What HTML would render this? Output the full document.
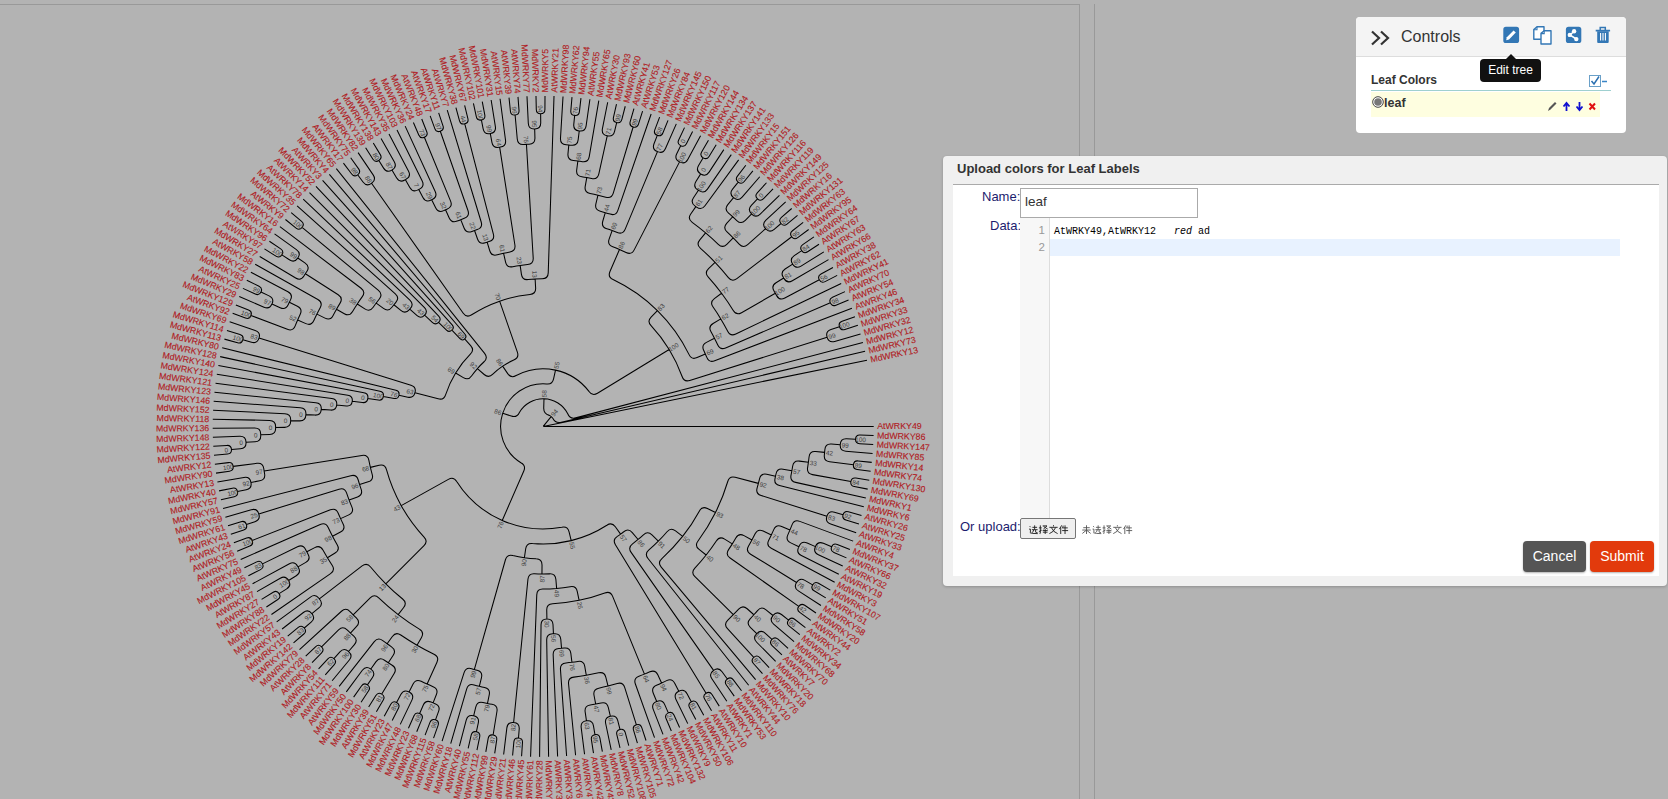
<!DOCTYPE html>
<html><head><meta charset="utf-8">
<style>
*{box-sizing:border-box;margin:0;padding:0}
html,body{width:1668px;height:799px;overflow:hidden;background:#b3b3b3;font-family:"Liberation Sans",sans-serif}
#tree{position:absolute;left:0;top:0;width:1668px;height:799px}
#tree text{font-family:"Liberation Sans",sans-serif}
.vl{position:absolute;top:4px;bottom:0;width:1px;background:#999}
#topl{position:absolute;left:0;top:4px;width:1080px;height:1px;background:#999}
/* controls */
#ctl{position:absolute;left:1356px;top:17px;width:270px;height:116px;background:#fff;border-radius:4px;overflow:hidden}
#ctlh{position:absolute;left:0;top:0;width:270px;height:40px;background:#f4f4f4;border-bottom:1px solid #ddd}
#ctlh .t{position:absolute;left:45px;top:11px;font-size:16px;color:#333}
#tip{position:absolute;left:1480px;top:59px;width:61px;height:23px;background:#111;border-radius:4px;color:#fff;font-size:12px;line-height:23px;text-align:center}
#tiparr{position:absolute;left:1506px;top:54px;width:0;height:0;border-left:5px solid transparent;border-right:5px solid transparent;border-bottom:5px solid #111}
#lc{position:absolute;left:15px;top:56px;font-size:12px;font-weight:bold;color:#333}
#lcline{position:absolute;left:15px;top:73px;width:240px;height:1px;background:#9fd0d0}
#row{position:absolute;left:15px;top:75px;width:229px;height:25px;background:#fefee0}
#row .n{position:absolute;left:13px;top:4px;font-size:12.5px;font-weight:bold;color:#333}
/* dialog */
#dlg{position:absolute;left:943px;top:156px;width:724px;height:430px;background:#f0f0f0;border-radius:4px;box-shadow:0 1px 3px rgba(0,0,0,.2)}
#dlg .title{position:absolute;left:14px;top:5px;font-size:13px;font-weight:bold;color:#333}
#content{position:absolute;left:10px;top:28px;width:706px;height:392px;background:#fff;border-top:1px solid #aaa}
.lab{position:absolute;font-size:13px;color:#1c1c6e}
#name{position:absolute;left:67px;top:3px;width:178px;height:30px;border:1px solid #aaa;background:#fff}
#name span{position:absolute;left:4px;top:5px;font-size:13.5px;color:#333}
#gut{position:absolute;left:67px;top:33px;width:30px;height:300px;background:#f7f7f7;border-right:1px solid #ddd}
.ln{position:absolute;right:4px;font-size:11.5px;color:#999;font-family:"Liberation Sans",sans-serif}
#hl{position:absolute;left:97px;top:54px;width:570px;height:17px;background:#e8f2ff}
#code{position:absolute;left:101px;top:38px;font-family:"Liberation Mono",monospace;font-size:10px;color:#000;white-space:pre;line-height:17px}
#filebtn{position:absolute;left:67px;top:333px;width:56px;height:21px;background:#efefef;border:1px solid #767676;border-radius:2px}
.btn{position:absolute;top:356px;height:31px;border-radius:4px;color:#fff;font-size:14px;text-align:center;line-height:31px;box-shadow:0 1px 2px rgba(0,0,0,.3)}
</style></head><body>
<svg id="tree" width="1668" height="799" viewBox="0 0 1668 799">
<path d="M543.2 426.4L873.7 426.4M543.2 426.4L551.17 416.64M551.17 416.64A12.6 12.6 0 0 0 549.29 415.37Q543.56 413.81 543.73 407.81L543.98 398.81M543.98 398.81A27.6 27.6 0 0 0 519.39 412.44Q516.94 417.9 511.23 416.06L502.67 413.29M502.67 413.29A42.6 42.6 0 0 0 520.88 462.69Q526.2 465.46 523.8 470.96L502.25 520.47M502.25 520.47A102.6 102.6 0 0 0 561.77 527.31Q567.64 526.05 569.07 531.87L571.21 540.62M571.21 540.62A117.6 117.6 0 0 0 606.87 525.27Q611.83 521.9 615.33 526.77L620.58 534.08M620.58 534.08A132.6 132.6 0 0 0 623.75 531.73Q628.43 527.98 632.29 532.57L638.08 539.47M638.08 539.47A147.6 147.6 0 0 0 643.39 534.79Q647.71 530.63 651.96 534.86L658.33 541.22M658.33 541.22A162.6 162.6 0 0 0 667.04 531.77Q670.84 527.13 675.55 530.85L682.62 536.42M682.62 536.42A177.6 177.6 0 0 0 699.29 511.13Q702.06 505.81 707.42 508.49L715.48 512.52M715.48 512.52A192.6 192.6 0 0 0 727.76 481.48Q729.38 475.7 735.18 477.24L758.38 483.38M758.38 483.38A222.6 222.6 0 0 0 759.53 478.85Q760.87 473 766.73 474.26L775.53 476.14M775.53 476.14A237.6 237.6 0 0 0 775.99 473.99Q777.11 468.1 783.02 469.15L791.88 470.73M791.88 470.73A252.6 252.6 0 0 0 792.64 466.25Q793.51 460.31 799.46 461.12L808.38 462.32M808.38 462.32A267.6 267.6 0 0 0 809.05 456.96Q809.67 450.99 815.64 451.55L824.6 452.37M824.6 452.37A282.6 282.6 0 0 0 824.84 449.71Q825.27 443.73 831.26 444.1L840.24 444.65M840.24 444.65A297.6 297.6 0 0 0 840.25 444.56Q840.55 438.57 846.55 438.82L855.54 439.18M855.54 439.18Q855.68 434.92 859.94 435.04L873.58 435.41M855.54 439.18Q855.34 443.44 859.59 443.67L873.21 444.42M840.24 444.65A297.6 297.6 0 0 1 840.23 444.74Q839.8 450.72 845.78 451.21L872.59 453.41M824.6 452.37A282.6 282.6 0 0 1 824.35 455.03Q823.67 460.99 829.63 461.73L853.45 464.67M853.45 464.67Q853.94 460.43 858.18 460.9L871.74 462.38M853.45 464.67Q852.9 468.89 857.12 469.47L870.63 471.33M808.38 462.32A267.6 267.6 0 0 1 807.6 467.67Q806.61 473.59 812.51 474.64L850.9 481.52M850.9 481.52Q851.62 477.32 855.83 478.02L869.29 480.24M850.9 481.52Q850.12 485.71 854.31 486.52L867.7 489.11M791.88 470.73A252.6 252.6 0 0 1 791.04 475.2Q789.81 481.07 795.67 482.37L865.87 497.93M775.53 476.14A237.6 237.6 0 0 1 775.06 478.29Q773.68 484.13 779.5 485.59L863.8 506.7M758.38 483.38A222.6 222.6 0 0 1 757.14 487.88Q755.41 493.63 761.13 495.44L826.9 516.28M826.9 516.28A297.6 297.6 0 0 0 826.93 516.19Q828.68 510.46 834.44 512.15L843.07 514.69M843.07 514.69Q844.25 510.6 848.35 511.74L861.49 515.42M843.07 514.69Q841.84 518.77 845.91 520.03L858.94 524.06M826.9 516.28A297.6 297.6 0 0 1 826.88 516.36Q825.01 522.06 830.69 523.99L856.16 532.64M715.48 512.52A192.6 192.6 0 0 1 698.02 540.97Q694.37 545.74 699.08 549.45L706.15 555.03M706.15 555.03A207.6 207.6 0 0 0 716.31 540.99Q719.55 535.94 724.64 539.11L732.29 543.86M732.29 543.86A222.6 222.6 0 0 0 735.81 537.98Q738.75 532.75 744.02 535.62L751.93 539.92M751.93 539.92A237.6 237.6 0 0 0 755.12 533.85Q757.76 528.46 763.18 531.04L771.31 534.91M771.31 534.91A252.6 252.6 0 0 0 773.76 529.6Q776.14 524.1 781.67 526.42L789.97 529.9M789.97 529.9A267.6 267.6 0 0 0 792.01 524.9Q794.16 519.29 799.79 521.38L853.15 541.13M789.97 529.9A267.6 267.6 0 0 1 787.83 534.86Q785.34 540.32 790.77 542.87L798.91 546.7M798.91 546.7A282.6 282.6 0 0 0 799.23 546.03Q801.71 540.57 807.2 542.99L815.43 546.63M815.43 546.63A297.6 297.6 0 0 0 815.47 546.55Q817.83 541.04 823.37 543.35L831.68 546.81M831.68 546.81Q833.29 542.87 837.25 544.46L849.9 549.54M831.68 546.81Q830.01 550.74 833.92 552.43L846.43 557.86M815.43 546.63A297.6 297.6 0 0 1 815.4 546.71Q812.92 552.17 818.36 554.71L842.73 566.08M798.91 546.7A282.6 282.6 0 0 1 798.6 547.38Q795.97 552.77 801.34 555.45L838.81 574.19M771.31 534.91A252.6 252.6 0 0 1 768.74 540.15Q765.97 545.47 771.26 548.3L834.67 582.2M751.93 539.92A237.6 237.6 0 0 1 748.56 545.9Q745.48 551.04 750.59 554.19L796.56 582.52M796.56 582.52A297.6 297.6 0 0 0 796.61 582.44Q799.7 577.3 804.87 580.35L812.63 584.91M812.63 584.91Q814.77 581.22 818.47 583.33L830.32 590.09M812.63 584.91Q810.45 588.57 814.09 590.78L825.75 597.85M796.56 582.52A297.6 297.6 0 0 1 796.52 582.59Q793.32 587.67 798.36 590.92L820.97 605.5M732.29 543.86A222.6 222.6 0 0 1 728.58 549.62Q725.19 554.57 730.1 558.03L798.78 606.4M798.78 606.4Q801.21 602.9 804.73 605.3L815.98 613M798.78 606.4Q796.3 609.87 799.75 612.37L810.79 620.37M706.15 555.03A207.6 207.6 0 0 1 694.85 568.17Q690.69 572.49 694.96 576.72L733.32 614.72M733.32 614.72A267.6 267.6 0 0 0 738.65 609.18Q742.7 604.75 747.17 608.75L753.88 614.75M753.88 614.75A282.6 282.6 0 0 0 757.55 610.57Q761.41 605.98 766.04 609.79L772.99 615.51M772.99 615.51A297.6 297.6 0 0 0 773.05 615.44Q776.81 610.77 781.52 614.49L788.58 620.06M788.58 620.06Q791.2 616.7 794.58 619.29L805.4 627.6M788.58 620.06Q785.92 623.39 789.23 626.08L799.82 634.67M772.99 615.51A297.6 297.6 0 0 1 772.94 615.58Q769.07 620.17 773.63 624.08L794.05 641.59M753.88 614.75A282.6 282.6 0 0 1 750.14 618.86Q746 623.21 750.31 627.39L756.77 633.66M756.77 633.66A297.6 297.6 0 0 0 756.83 633.59Q760.96 629.24 765.35 633.33L771.94 639.47M771.94 639.47Q774.82 636.33 777.98 639.19L788.08 648.35M771.94 639.47Q769.01 642.57 772.09 645.51L781.94 654.95M756.77 633.66A297.6 297.6 0 0 1 756.71 633.72Q752.48 637.98 756.7 642.25L775.62 661.37M733.32 614.72A267.6 267.6 0 0 1 727.84 620.1Q723.45 624.19 727.49 628.62L753.76 657.45M753.76 657.45Q756.89 654.56 759.8 657.67L769.13 667.62M753.76 657.45Q750.59 660.3 753.42 663.49L762.47 673.69M682.62 536.42A177.6 177.6 0 0 1 661.89 558.52Q657.36 562.45 661.22 567.05L755.64 679.58M658.33 541.22A162.6 162.6 0 0 1 648.91 549.95Q644.28 553.76 648.01 558.46L748.66 685.28M638.08 539.47A147.6 147.6 0 0 1 632.54 543.89Q627.69 547.42 631.13 552.34L713.56 670.41M713.56 670.41A297.6 297.6 0 0 0 713.63 670.36Q718.52 666.88 722.05 671.73L727.36 679M727.36 679Q730.78 676.46 733.34 679.87L741.52 690.78M727.36 679Q723.89 681.49 726.36 684.96L734.24 696.09M713.56 670.41A297.6 297.6 0 0 1 713.49 670.46Q708.54 673.85 711.87 678.83L726.82 701.2M620.58 534.08A132.6 132.6 0 0 1 617.35 536.33Q612.3 539.57 615.42 544.69L706.1 693.2M706.1 693.2Q709.72 690.96 711.99 694.56L719.25 706.11M706.1 693.2Q702.44 695.4 704.62 699.07L711.56 710.8M571.21 540.62A117.6 117.6 0 0 1 532.49 543.51Q526.54 542.81 525.69 548.75L524.41 557.66M524.41 557.66A132.6 132.6 0 0 0 536.09 558.81Q542.08 559 542.03 565L541.96 573.99M541.96 573.99A147.6 147.6 0 0 0 549.4 573.87Q555.39 573.5 555.89 579.48L556.63 588.44M556.63 588.44A162.6 162.6 0 0 0 570.18 586.75Q576.07 585.64 577.29 591.52L579.11 600.33M579.11 600.33A177.6 177.6 0 0 0 604.79 592.98Q610.38 590.8 612.65 596.36L644.43 674.12M644.43 674.12A267.6 267.6 0 0 0 649.82 671.84Q655.3 669.39 657.81 674.84L661.58 683.01M661.58 683.01A282.6 282.6 0 0 0 666.61 680.63Q671.98 677.95 674.71 683.29L678.81 691.31M678.81 691.31A297.6 297.6 0 0 0 678.89 691.27Q684.2 688.48 687.05 693.76L691.31 701.69M691.31 701.69Q695.05 699.64 697.12 703.37L703.74 715.29M691.31 701.69Q687.54 703.68 689.51 707.46L695.81 719.56M678.81 691.31A297.6 297.6 0 0 1 678.74 691.34Q673.37 694.02 675.99 699.42L687.76 723.61M661.58 683.01A282.6 282.6 0 0 1 656.51 685.29Q650.99 687.64 653.28 693.18L656.71 701.5M656.71 701.5A297.6 297.6 0 0 0 656.79 701.47Q662.31 699.12 664.72 704.62L668.32 712.87M668.32 712.87Q672.21 711.14 673.97 715.02L679.6 727.44M668.32 712.87Q664.4 714.55 666.05 718.48L671.34 731.05M656.71 701.5A297.6 297.6 0 0 1 656.63 701.53Q651.06 703.77 653.24 709.36L662.99 734.43M644.43 674.12A267.6 267.6 0 0 1 638.98 676.27Q633.35 678.36 635.37 684.01L654.54 737.58M579.11 600.33A177.6 177.6 0 0 1 552.61 603.75Q546.62 603.97 546.73 609.97L546.91 618.96M546.91 618.96Q552.71 618.77 552.99 624.56L553.45 633.75M553.45 633.75A207.6 207.6 0 0 0 554.3 633.7Q560.29 633.3 560.78 639.28L561.52 648.24M561.52 648.24A222.6 222.6 0 0 0 564.14 648.01Q570.11 647.37 570.84 653.32L571.92 662.26M571.92 662.26A237.6 237.6 0 0 0 577.82 661.46Q583.74 660.52 584.76 666.43L586.3 675.3M586.3 675.3A252.6 252.6 0 0 0 598.57 672.86Q604.41 671.47 605.86 677.29L608.04 686.02M608.04 686.02A267.6 267.6 0 0 0 617.23 683.56Q622.97 681.83 624.76 687.56L636.39 724.79M636.39 724.79Q640.45 723.49 641.77 727.54L646.02 740.5M636.39 724.79Q632.31 726.03 633.53 730.12L637.41 743.19M608.04 686.02A267.6 267.6 0 0 1 598.78 688.16Q592.9 689.34 594.01 695.24L595.68 704.08M595.68 704.08A282.6 282.6 0 0 0 601.14 703Q607 701.7 608.35 707.55L610.38 716.32M610.38 716.32A297.6 297.6 0 0 0 610.47 716.3Q616.3 714.88 617.77 720.7L619.98 729.42M619.98 729.42Q624.11 728.35 625.21 732.47L628.74 745.64M619.98 729.42Q615.84 730.44 616.83 734.59L620 747.85M610.38 716.32A297.6 297.6 0 0 1 610.3 716.34Q604.44 717.63 605.67 723.5L611.21 749.83M595.68 704.08A282.6 282.6 0 0 1 590.21 705.06Q584.28 706 585.16 711.93L586.47 720.84M586.47 720.84A297.6 297.6 0 0 0 586.55 720.83Q592.48 719.89 593.47 725.81L594.96 734.68M594.96 734.68Q599.16 733.95 599.92 738.14L602.37 751.56M594.96 734.68Q590.75 735.36 591.4 739.57L593.48 753.05M586.47 720.84A297.6 297.6 0 0 1 586.38 720.85Q580.43 721.66 581.19 727.61L584.55 754.3M586.3 675.3A252.6 252.6 0 0 1 573.92 677.12Q567.96 677.78 568.55 683.75L575.59 755.31M571.92 662.26A237.6 237.6 0 0 1 566.01 662.9Q560.03 663.4 560.46 669.39L566.61 756.07M561.52 648.24A222.6 222.6 0 0 1 558.9 648.45Q552.91 648.79 553.17 654.78L557.62 756.59M553.45 633.75A207.6 207.6 0 0 1 552.59 633.79Q546.6 633.97 546.69 639.97L548.61 756.86M546.91 618.96Q541.1 618.99 541.04 624.79L539.59 756.88M556.63 588.44A162.6 162.6 0 0 1 542.99 589Q536.99 588.88 536.76 594.88L530.58 756.66M541.96 573.99A147.6 147.6 0 0 1 534.51 573.74Q528.53 573.27 527.94 579.24L513.63 722.53M513.63 722.53A297.6 297.6 0 0 0 513.71 722.54Q519.69 723.07 519.21 729.05L518.5 738.02M518.5 738.02Q522.75 738.33 522.48 742.58L521.58 756.19M518.5 738.02Q514.26 737.66 513.86 741.9L512.6 755.48M513.63 722.53A297.6 297.6 0 0 1 513.54 722.52Q507.58 721.86 506.86 727.82L503.64 754.52M524.41 557.66A132.6 132.6 0 0 1 512.88 555.49Q507.07 553.98 505.44 559.76L474.38 669.44M474.38 669.44A252.6 252.6 0 0 0 477.1 670.2Q482.91 671.7 481.48 677.53L479.33 686.27M479.33 686.27A267.6 267.6 0 0 0 484.59 687.5Q490.46 688.75 489.27 694.63L487.5 703.46M487.5 703.46A282.6 282.6 0 0 0 492.01 704.33Q497.93 705.35 496.97 711.27L493.12 734.96M493.12 734.96Q497.33 735.62 496.71 739.83L494.71 753.32M493.12 734.96Q488.92 734.25 488.18 738.45L485.81 751.88M487.5 703.46A282.6 282.6 0 0 1 483 702.51Q477.15 701.17 475.75 707.01L473.65 715.76M473.65 715.76A297.6 297.6 0 0 0 473.73 715.78Q479.58 717.12 478.3 722.98L476.37 731.77M476.37 731.77Q480.54 732.66 479.69 736.83L476.96 750.19M476.37 731.77Q472.22 730.83 471.25 734.99L468.15 748.27M473.65 715.76A297.6 297.6 0 0 1 473.56 715.74Q467.74 714.28 466.22 720.08L459.4 746.1M479.33 686.27A267.6 267.6 0 0 1 474.1 684.92Q468.32 683.31 466.64 689.07L450.72 743.7M474.38 669.44A252.6 252.6 0 0 1 471.66 668.66Q465.93 666.89 464.09 672.6L442.1 741.06M502.25 520.47A102.6 102.6 0 0 1 456.69 481.56Q453.61 476.41 448.37 479.34L401.22 505.66M401.22 505.66A162.6 162.6 0 0 0 424.07 537.06Q428.23 541.38 423.99 545.62L385.8 583.81M385.8 583.81A222.6 222.6 0 0 0 402.64 599.01Q407.34 602.73 403.68 607.49L398.19 614.62M398.19 614.62A237.6 237.6 0 0 0 419.35 629.17Q424.51 632.23 421.51 637.43L417.01 645.22M417.01 645.22A252.6 252.6 0 0 0 433.98 654.17Q439.42 656.7 436.96 662.17L427.1 684.05M427.1 684.05A282.6 282.6 0 0 0 433.07 686.66Q438.62 688.94 436.4 694.51L433.07 702.87M433.07 702.87A297.6 297.6 0 0 0 435.04 703.65Q440.65 705.77 438.59 711.41L435.48 719.86M435.48 719.86Q439.5 721.3 438.08 725.32L433.56 738.18M435.48 719.86Q431.49 718.36 429.97 722.34L425.1 735.08M433.07 702.87A297.6 297.6 0 0 1 431.11 702.08Q425.58 699.77 423.2 705.28L419.65 713.55M419.65 713.55Q423.57 715.2 421.94 719.14L416.72 731.74M419.65 713.55Q415.74 711.84 414 715.73L408.44 728.18M427.1 684.05A282.6 282.6 0 0 1 421.18 681.3Q415.8 678.65 413.09 684.01L409.03 692.04M409.03 692.04A297.6 297.6 0 0 0 409.11 692.08Q414.49 694.73 411.9 700.14L400.27 724.39M409.03 692.04A297.6 297.6 0 0 1 408.96 692Q403.63 689.24 400.81 694.54L396.59 702.49M396.59 702.49Q400.37 704.46 398.42 708.25L392.19 720.39M396.59 702.49Q392.84 700.46 390.79 704.2L384.23 716.16M417.01 645.22A252.6 252.6 0 0 1 400.77 635.02Q395.86 631.57 392.36 636.45L387.11 643.76M387.11 643.76A267.6 267.6 0 0 0 391.53 646.87Q396.51 650.21 393.22 655.23L388.28 662.76M388.28 662.76A282.6 282.6 0 0 0 392.15 665.24Q397.25 668.4 394.16 673.53L381.76 694.09M381.76 694.09Q385.43 696.26 383.27 699.94L376.39 711.72M381.76 694.09Q378.13 691.86 375.88 695.48L368.67 707.06M388.28 662.76A282.6 282.6 0 0 1 384.46 660.2Q379.53 656.78 376.06 661.67L370.85 669.01M370.85 669.01A297.6 297.6 0 0 0 370.92 669.06Q375.84 672.48 372.47 677.45L367.41 684.89M367.41 684.89Q370.95 687.26 368.6 690.82L361.09 702.2M367.41 684.89Q363.9 682.47 361.46 685.96L353.63 697.13M370.85 669.01A297.6 297.6 0 0 1 370.77 668.96Q365.92 665.43 362.35 670.25L346.32 691.86M387.11 643.76A267.6 267.6 0 0 1 382.75 640.56Q377.99 636.91 374.29 641.63L339.16 686.39M398.19 614.62A237.6 237.6 0 0 1 378.73 597.87Q374.45 593.66 370.19 597.89L353.14 614.78M353.14 614.78A267.6 267.6 0 0 0 356.33 617.94Q360.67 622.09 356.58 626.47L350.44 633.05M350.44 633.05A282.6 282.6 0 0 0 353.83 636.16Q358.32 640.14 354.4 644.67L348.51 651.48M348.51 651.48A297.6 297.6 0 0 0 348.57 651.54Q353.15 655.41 349.32 660.03L332.14 680.73M348.51 651.48A297.6 297.6 0 0 1 348.44 651.42Q343.95 647.45 339.93 651.91L333.9 658.59M333.9 658.59Q337.09 661.43 334.28 664.63L325.29 674.88M333.9 658.59Q330.76 655.72 327.86 658.84L318.59 668.85M350.44 633.05A282.6 282.6 0 0 1 347.1 629.89Q342.83 625.68 338.57 629.91L321.56 646.84M321.56 646.84Q324.58 649.84 321.6 652.89L312.06 662.63M321.56 646.84Q318.57 643.8 315.51 646.76L305.71 656.24M353.14 614.78A267.6 267.6 0 0 1 350.01 611.57Q345.9 607.19 341.48 611.24L299.53 649.68M385.8 583.81A222.6 222.6 0 0 1 370.6 566.97Q366.88 562.27 362.12 565.93L319.35 598.89M319.35 598.89A282.6 282.6 0 0 0 319.81 599.48Q323.53 604.19 318.87 607.96L311.87 613.62M311.87 613.62A297.6 297.6 0 0 0 311.92 613.69Q315.75 618.31 311.16 622.18L304.28 627.99M304.28 627.99Q307.05 631.23 303.83 634.02L293.53 642.96M304.28 627.99Q301.56 624.71 298.26 627.42L287.72 636.07M311.87 613.62A297.6 297.6 0 0 1 311.82 613.56Q308.09 608.85 303.35 612.53L282.1 629.02M319.35 598.89A282.6 282.6 0 0 1 318.9 598.3Q315.3 593.5 310.46 597.05L276.67 621.83M401.22 505.66A162.6 162.6 0 0 1 386.48 469.73Q384.99 463.92 379.15 465.31L370.39 467.38M370.39 467.38A177.6 177.6 0 0 0 372.18 474.3Q373.9 480.05 368.18 481.86L359.6 484.58M359.6 484.58A192.6 192.6 0 0 0 361.1 489.12Q363.14 494.76 357.53 496.89L349.12 500.09M349.12 500.09A207.6 207.6 0 0 0 351.84 506.9Q354.25 512.39 348.79 514.88L340.59 518.61M340.59 518.61A222.6 222.6 0 0 0 343.11 523.95Q345.81 529.3 340.49 532.08L332.51 536.24M332.51 536.24A237.6 237.6 0 0 0 337.17 544.74Q340.22 549.9 335.09 553.02L327.41 557.7M327.41 557.7A252.6 252.6 0 0 0 332.14 565.18Q335.5 570.15 330.56 573.57L271.44 614.49M327.41 557.7A252.6 252.6 0 0 1 322.94 550.06Q320.06 544.79 314.76 547.6L306.81 551.82M306.81 551.82A267.6 267.6 0 0 0 308.07 554.17Q311 559.41 305.79 562.39L297.98 566.86M297.98 566.86A282.6 282.6 0 0 0 298.35 567.51Q301.4 572.68 296.27 575.78L288.57 580.44M288.57 580.44A297.6 297.6 0 0 0 288.61 580.51Q291.77 585.62 286.7 588.83L279.1 593.64M279.1 593.64Q281.4 597.23 277.83 599.55L266.41 607.01M279.1 593.64Q276.84 590.02 273.21 592.25L261.59 599.39M288.57 580.44A297.6 297.6 0 0 1 288.52 580.37Q285.47 575.2 280.27 578.2L256.98 591.65M297.98 566.86A282.6 282.6 0 0 1 297.61 566.22Q294.7 560.97 289.42 563.83L252.58 583.78M306.81 551.82A267.6 267.6 0 0 1 305.57 549.46Q302.87 544.1 297.49 546.74L262.46 563.89M262.46 563.89Q264.36 567.71 260.56 569.64L248.4 575.8M262.46 563.89Q260.61 560.05 256.76 561.88L244.43 567.71M332.51 536.24A237.6 237.6 0 0 1 328.21 527.55Q325.72 522.09 320.23 524.51L240.69 559.51M340.59 518.61A222.6 222.6 0 0 1 338.22 513.2Q335.96 507.64 330.37 509.83L252.16 540.49M252.16 540.49Q253.75 544.45 249.8 546.06L237.17 551.21M252.16 540.49Q250.64 536.51 246.65 538.01L233.88 542.82M349.12 500.09A207.6 207.6 0 0 1 346.64 493.18Q344.79 487.48 339.05 489.24L258.77 513.95M258.77 513.95A297.6 297.6 0 0 0 258.8 514.04Q260.62 519.75 254.92 521.63L246.38 524.46M246.38 524.46Q247.74 528.49 243.71 529.89L230.82 534.34M246.38 524.46Q245.07 520.4 241 521.68L228 525.78M258.77 513.95A297.6 297.6 0 0 1 258.74 513.87Q257.04 508.12 251.27 509.77L225.4 517.15M359.6 484.58A192.6 192.6 0 0 1 358.21 480Q356.63 474.22 350.82 475.71L223.05 508.45M370.39 467.38A177.6 177.6 0 0 1 368.89 460.4Q367.84 454.49 361.91 455.44L264.16 471.1M264.16 471.1A282.6 282.6 0 0 0 264.59 473.74Q265.66 479.64 259.77 480.77L250.93 482.47M250.93 482.47A297.6 297.6 0 0 0 250.95 482.55Q252.14 488.43 246.27 489.68L237.47 491.56M237.47 491.56Q238.38 495.72 234.23 496.67L220.93 499.69M237.47 491.56Q236.61 487.39 232.43 488.22L219.05 490.88M250.93 482.47A297.6 297.6 0 0 1 250.91 482.38Q249.84 476.48 243.93 477.49L217.41 482.01M264.16 471.1A282.6 282.6 0 0 1 263.75 468.46Q262.92 462.52 256.97 463.29L233.16 466.36M233.16 466.36Q233.74 470.58 229.52 471.18L216.02 473.11M233.16 466.36Q232.65 462.13 228.41 462.61L214.87 464.17M502.67 413.29A42.6 42.6 0 0 1 546.37 383.92Q552.3 384.78 553.58 378.92L555.51 370.13M555.51 370.13A57.6 57.6 0 0 0 516.19 375.52Q511.05 378.61 507.7 373.63L502.68 366.16M502.68 366.16A72.6 72.6 0 0 0 492.83 374.12Q488.68 378.46 484.18 374.49L477.42 368.55M477.42 368.55A87.6 87.6 0 0 0 471.73 375.74Q468.44 380.75 463.31 377.62L455.63 372.93M455.63 372.93A102.6 102.6 0 0 0 445.66 394.56Q443.97 400.32 438.17 398.79L414.96 392.69M414.96 392.69Q413.59 398.41 407.85 397.17L398.93 395.24M398.93 395.24Q398.13 399.18 394.18 398.44L383.39 396.42M383.39 396.42Q382.63 400.78 378.25 400.09L367.82 398.42M367.82 398.42Q367.12 403.21 362.32 402.58L352.25 401.25M352.25 401.25Q351.64 406.46 346.42 405.91L336.72 404.9M336.72 404.9Q336.21 410.52 330.59 410.09L321.25 409.37M321.25 409.37A222.6 222.6 0 0 0 321.25 409.39Q320.87 415.38 314.88 415.09L305.89 414.64M305.89 414.64A237.6 237.6 0 0 0 305.87 415.02Q305.66 421.01 299.66 420.88L290.66 420.67M290.66 420.67A252.6 252.6 0 0 0 290.65 421.35Q290.6 427.35 284.6 427.37L275.6 427.4M275.6 427.4A267.6 267.6 0 0 0 275.61 428.24Q275.71 434.24 269.72 434.42L260.72 434.68M260.72 434.68A282.6 282.6 0 0 0 260.74 435.43Q261 441.42 255.01 441.74L246.02 442.22M246.02 442.22A297.6 297.6 0 0 0 246.03 442.31Q246.41 448.29 240.42 448.73L231.45 449.4M231.45 449.4Q231.79 453.64 227.54 454.02L213.96 455.2M231.45 449.4Q231.16 445.14 226.91 445.4L213.29 446.22M246.02 442.22A297.6 297.6 0 0 1 246.02 442.13Q245.76 436.14 239.76 436.33L212.88 437.21M260.72 434.68A282.6 282.6 0 0 1 260.7 433.94Q260.6 427.94 254.6 427.97L212.7 428.2M275.6 427.4A267.6 267.6 0 0 1 275.6 426.56Q275.66 420.56 269.67 420.43L212.78 419.19M290.66 420.67A252.6 252.6 0 0 1 290.68 420Q290.9 414.01 284.91 413.71L213.1 410.18M305.89 414.64A237.6 237.6 0 0 1 305.91 414.26Q306.29 408.27 300.31 407.82L213.66 401.19M321.25 409.37A222.6 222.6 0 0 1 321.25 409.35Q321.79 403.37 315.83 402.75L214.47 392.21M336.72 404.9Q337.38 399.3 331.78 398.57L215.53 383.26M352.25 401.25Q353 396.06 347.83 395.24L216.83 374.34M367.82 398.42Q368.64 393.65 363.89 392.76L218.37 365.46M383.39 396.42Q384.26 392.07 379.93 391.14L220.15 356.63M398.93 395.24Q399.83 391.32 395.92 390.36L222.17 347.84M414.96 392.69Q416.58 387.04 410.96 385.3L259.01 338.07M259.01 338.07A297.6 297.6 0 0 0 258.98 338.15Q257.26 343.9 251.5 342.24L242.85 339.74M242.85 339.74Q241.7 343.85 237.59 342.72L224.43 339.12M242.85 339.74Q244.06 335.66 239.98 334.42L226.93 330.46M259.01 338.07A297.6 297.6 0 0 1 259.04 337.99Q260.88 332.28 255.18 330.38L229.66 321.87M455.63 372.93A102.6 102.6 0 0 1 470.32 354.18Q474.67 350.05 470.66 345.58L464.65 338.88M464.65 338.88Q462.24 341.11 459.98 338.73L451.91 330.23M451.91 330.23Q449.2 332.87 446.52 330.21L438.57 322.29M438.57 322.29Q435.52 325.46 432.31 322.45L424.57 315.2M424.57 315.2Q421.04 319.08 417.1 315.62L409.77 309.18M409.77 309.18A177.6 177.6 0 0 0 409.36 309.66Q405.5 314.24 400.84 310.45L393.86 304.77M393.86 304.77A192.6 192.6 0 0 0 391.91 307.21Q388.28 311.98 383.45 308.41L376.21 303.06M376.21 303.06A207.6 207.6 0 0 0 373.19 307.26Q369.82 312.22 364.81 308.92L357.29 303.97M357.29 303.97A222.6 222.6 0 0 0 352.58 311.45Q349.55 316.63 344.33 313.67L336.5 309.23M336.5 309.23A237.6 237.6 0 0 0 333.11 315.43Q330.37 320.77 325 318.1L316.94 314.1M316.94 314.1A252.6 252.6 0 0 0 313.86 320.53Q311.41 326.01 305.9 323.62L297.64 320.05M297.64 320.05A267.6 267.6 0 0 0 295.2 325.87Q293.01 331.46 287.4 329.33L250.94 315.49M250.94 315.49Q249.45 319.48 245.45 318.03L232.63 313.36M250.94 315.49Q252.48 311.51 248.51 309.95L235.83 304.94M297.64 320.05A267.6 267.6 0 0 1 300.22 314.28Q302.79 308.86 297.4 306.23L289.32 302.27M289.32 302.27A282.6 282.6 0 0 0 288.16 304.68Q285.63 310.12 280.16 307.65L271.96 303.95M271.96 303.95A297.6 297.6 0 0 0 271.92 304.03Q269.51 309.52 263.99 307.16L239.26 296.6M271.96 303.95A297.6 297.6 0 0 1 272 303.87Q274.52 298.43 269.1 295.85L260.98 291.98M260.98 291.98Q259.17 295.84 255.3 294.06L242.91 288.36M260.98 291.98Q262.84 288.14 259.01 286.26L246.78 280.22M289.32 302.27A282.6 282.6 0 0 1 290.5 299.88Q293.25 294.54 287.94 291.75L250.88 272.2M316.94 314.1A252.6 252.6 0 0 1 320.2 307.76Q323.08 302.49 317.85 299.55L255.19 264.28M336.5 309.23A237.6 237.6 0 0 1 340.07 303.14Q343.25 298.06 338.2 294.81L305.38 273.75M305.38 273.75A282.6 282.6 0 0 1 306.83 271.51Q310.17 266.52 305.22 263.13L297.8 258.04M297.8 258.04A297.6 297.6 0 0 0 297.75 258.11Q294.41 263.09 289.39 259.8L281.87 254.86M281.87 254.86Q279.56 258.44 275.96 256.15L264.46 248.82M281.87 254.86Q284.23 251.31 280.7 248.93L269.4 241.29M297.8 258.04A297.6 297.6 0 0 1 297.85 257.97Q301.3 253.05 296.42 249.56L274.55 233.89M305.38 273.75A282.6 282.6 0 0 0 303.94 276Q300.81 281.11 295.66 278.03L259.72 256.49M357.29 303.97A222.6 222.6 0 0 1 362.3 296.68Q365.86 291.85 361.08 288.23L279.9 226.64M376.21 303.06A207.6 207.6 0 0 1 379.33 298.95Q383.08 294.26 378.46 290.44L302.1 227.43M302.1 227.43Q299.41 230.74 296.08 228.07L285.45 219.53M302.1 227.43Q304.83 224.16 301.58 221.4L291.18 212.58M393.86 304.77A192.6 192.6 0 0 1 395.85 302.37Q399.79 297.84 395.32 293.83L297.11 205.79M409.77 309.18A177.6 177.6 0 0 1 410.19 308.71Q414.24 304.29 409.88 300.16L303.22 199.16M424.57 315.2Q428.22 311.42 424.51 307.71L309.5 192.7M438.57 322.29Q441.72 319.22 438.69 316.03L315.96 186.42M451.91 330.23Q454.69 327.67 452.16 324.85L322.59 180.31M464.65 338.88Q467.12 336.73 465 334.23L329.38 174.38M477.42 368.55A87.6 87.6 0 0 1 483.82 361.99Q488.37 358.08 484.61 353.4L336.33 168.65M502.68 366.16A72.6 72.6 0 0 1 513.76 360.04Q519.34 357.83 517.37 352.17L499.63 301.16M499.63 301.16A132.6 132.6 0 0 0 471.68 314.74Q466.7 318.09 463.24 313.19L371.51 183.32M371.51 183.32A297.6 297.6 0 0 0 371.44 183.37Q366.57 186.88 363.01 182.05L357.67 174.81M357.67 174.81Q354.26 177.36 351.68 173.97L343.44 163.1M357.67 174.81Q361.12 172.3 358.63 168.84L350.69 157.75M371.51 183.32A297.6 297.6 0 0 1 371.58 183.27Q376.52 179.86 373.15 174.89L358.09 152.6M499.63 301.16A132.6 132.6 0 0 1 529.97 294.46Q535.95 294 535.62 288.01L535.13 279.02M535.13 279.02A147.6 147.6 0 0 0 528.24 279.56Q522.29 280.29 521.43 274.35L520.16 265.44M520.16 265.44A162.6 162.6 0 0 0 512.79 266.67Q506.92 267.9 505.58 262.05L503.57 253.28M503.57 253.28A177.6 177.6 0 0 0 497.28 254.84Q491.51 256.49 489.76 250.75L487.14 242.14M487.14 242.14A192.6 192.6 0 0 0 485.2 242.74Q479.51 244.64 477.53 238.97L474.55 230.48M474.55 230.48A207.6 207.6 0 0 0 471.89 231.43Q466.29 233.57 464.06 228L460.73 219.64M460.73 219.64A222.6 222.6 0 0 0 457.2 221.09Q451.69 223.48 449.23 218.01L445.53 209.8M445.53 209.8A237.6 237.6 0 0 0 443.71 210.63Q438.29 213.21 435.64 207.83L431.67 199.75M431.67 199.75A252.6 252.6 0 0 0 431.07 200.05Q425.72 202.78 422.93 197.47L418.75 189.5M418.75 189.5A267.6 267.6 0 0 0 418 189.89Q412.73 192.76 409.81 187.52L405.42 179.66M405.42 179.66A282.6 282.6 0 0 0 404.77 180.03Q399.57 183.02 396.52 177.85L391.95 170.1M391.95 170.1A297.6 297.6 0 0 0 391.87 170.15Q386.74 173.25 383.58 168.15L378.85 160.49M378.85 160.49Q375.24 162.76 372.95 159.16L365.62 147.66M378.85 160.49Q382.49 158.27 380.3 154.62L373.29 142.92M391.95 170.1A297.6 297.6 0 0 1 392.02 170.06Q397.22 167.06 394.28 161.83L381.08 138.39M405.42 179.66A282.6 282.6 0 0 1 406.07 179.3Q411.34 176.45 408.55 171.14L389 134.08M418.75 189.5A267.6 267.6 0 0 1 419.49 189.11Q424.84 186.4 422.19 181.02L397.02 129.98M431.67 199.75A252.6 252.6 0 0 1 432.28 199.46Q437.7 196.89 435.19 191.44L405.16 126.11M445.53 209.8A237.6 237.6 0 0 1 447.35 208.99Q452.87 206.64 450.59 201.09L424.36 137.27M424.36 137.27Q420.43 138.92 418.76 135L413.4 122.46M424.36 137.27Q428.31 135.68 426.75 131.71L421.74 119.03M460.73 219.64A222.6 222.6 0 0 1 464.29 218.26Q469.93 216.21 467.95 210.54L440.3 131.22M440.3 131.22Q436.28 132.65 434.83 128.65L430.16 115.83M440.3 131.22Q444.33 129.85 442.99 125.8L438.67 112.86M474.55 230.48A207.6 207.6 0 0 1 477.22 229.56Q482.94 227.74 481.2 222L447.26 110.13M487.14 242.14A192.6 192.6 0 0 1 489.09 241.56Q494.88 239.96 493.37 234.15L464.77 123.8M464.77 123.8Q460.65 124.9 459.52 120.79L455.92 107.63M464.77 123.8Q468.9 122.76 467.89 118.62L464.64 105.37M503.57 253.28A177.6 177.6 0 0 1 509.91 251.95Q515.82 250.92 514.9 244.99L499.64 147.18M499.64 147.18A282.6 282.6 0 0 0 498.9 147.29Q492.99 148.3 491.92 142.39L490.32 133.54M490.32 133.54A297.6 297.6 0 0 0 490.24 133.55Q484.35 134.68 483.16 128.8L481.38 119.97M481.38 119.97Q477.21 120.85 476.31 116.68L473.43 103.35M481.38 119.97Q485.56 119.16 484.78 114.97L482.26 101.57M490.32 133.54A297.6 297.6 0 0 1 490.41 133.52Q496.32 132.51 495.38 126.59L491.14 100.03M499.64 147.18A282.6 282.6 0 0 1 500.37 147.06Q506.31 146.22 505.53 140.27L500.06 98.73M520.16 265.44A162.6 162.6 0 0 1 527.58 264.55Q533.56 264.09 533.21 258.1L526.45 144.3M526.45 144.3A282.6 282.6 0 0 0 523.78 144.47Q517.8 144.94 517.26 138.97L515.11 115.06M515.11 115.06Q510.86 115.48 510.42 111.24L509.01 97.67M515.11 115.06Q519.35 114.71 519.03 110.46L517.99 96.86M526.45 144.3A282.6 282.6 0 0 1 529.11 144.15Q535.11 143.92 534.94 137.92L534.68 128.92M534.68 128.92A297.6 297.6 0 0 0 534.59 128.92Q528.6 129.16 528.3 123.17L526.98 96.3M534.68 128.92A297.6 297.6 0 0 1 534.77 128.92Q540.77 128.81 540.72 122.81L540.64 113.81M540.64 113.81Q536.38 113.87 536.29 109.61L535.99 95.98M540.64 113.81Q544.9 113.8 544.93 109.54L545 95.9M535.13 279.02A147.6 147.6 0 0 1 542.03 278.8Q548.03 278.88 548.23 272.88L554.01 96.08M555.51 370.13A57.6 57.6 0 0 1 588.98 391.44Q592.36 396.39 597.49 393.26L669.18 349.5M669.18 349.5A147.6 147.6 0 0 0 651.06 325.64Q646.87 321.34 651.09 317.07L657.41 310.66M657.41 310.66A162.6 162.6 0 0 0 613.05 279.57Q607.58 277.09 609.96 271.58L619.46 249.54M619.46 249.54A192.6 192.6 0 0 0 612.76 246.8Q607.13 244.72 609.12 239.06L612.11 230.57M612.11 230.57A207.6 207.6 0 0 0 606.83 228.79Q601.1 227.04 602.77 221.27L605.28 212.63M605.28 212.63A222.6 222.6 0 0 0 600.32 211.25Q594.5 209.79 595.89 203.95L597.96 195.2M597.96 195.2A237.6 237.6 0 0 0 590.08 193.47Q584.18 192.36 585.21 186.45L586.77 177.59M586.77 177.59A252.6 252.6 0 0 0 581.85 176.78Q575.91 175.93 576.69 169.98L577.86 161.05M577.86 161.05A267.6 267.6 0 0 0 573.4 160.51Q567.43 159.9 567.97 153.92L568.79 144.96M568.79 144.96A282.6 282.6 0 0 0 566.13 144.73Q560.14 144.31 560.5 138.32L563.02 96.49M568.79 144.96A282.6 282.6 0 0 1 571.45 145.22Q577.41 145.88 578.14 139.92L579.23 130.99M579.23 130.99A297.6 297.6 0 0 0 579.14 130.98Q573.18 130.31 573.78 124.34L574.69 115.39M574.69 115.39Q570.44 114.99 570.82 110.74L572 97.16M574.69 115.39Q578.93 115.85 579.41 111.61L580.97 98.07M579.23 130.99A297.6 297.6 0 0 1 579.31 131Q585.26 131.79 586.11 125.85L589.91 99.22M577.86 161.05A267.6 267.6 0 0 1 582.3 161.67Q588.23 162.62 589.24 156.7L598.81 100.61M586.77 177.59A252.6 252.6 0 0 1 591.66 178.49Q597.54 179.71 598.83 173.85L607.22 135.77M607.22 135.77A297.6 297.6 0 0 0 607.13 135.75Q601.26 134.52 602.43 128.63L607.68 102.25M607.22 135.77A297.6 297.6 0 0 1 607.3 135.79Q613.15 137.14 614.56 131.3L616.67 122.56M616.67 122.56Q612.52 121.58 613.47 117.43L616.49 104.13M616.67 122.56Q620.81 123.59 621.87 119.46L625.25 106.25M597.96 195.2A237.6 237.6 0 0 1 605.78 197.19Q611.55 198.84 613.28 193.1L633.13 127.01M633.13 127.01Q629.04 125.82 630.21 121.72L633.95 108.6M633.13 127.01Q637.2 128.27 638.48 124.2L642.58 111.2M605.28 212.63A222.6 222.6 0 0 1 610.2 214.12Q615.9 216.01 617.86 210.34L651.14 114.02M612.11 230.57A207.6 207.6 0 0 1 617.33 232.49Q622.91 234.71 625.21 229.17L657.46 151.61M657.46 151.61A297.6 297.6 0 0 0 657.38 151.58Q651.82 149.33 654.01 143.74L657.29 135.36M657.29 135.36Q653.31 133.84 654.81 129.85L659.62 117.08M657.29 135.36Q661.25 136.95 662.86 133L668.01 120.37M657.46 151.61A297.6 297.6 0 0 1 657.54 151.64Q663.06 154 665.47 148.51L676.31 123.89M619.46 249.54A192.6 192.6 0 0 1 626.06 252.53Q631.43 255.2 634.18 249.87L679.54 161.87M679.54 161.87A297.6 297.6 0 0 0 679.46 161.83Q674.1 159.13 676.74 153.74L680.69 145.66M680.69 145.66Q676.85 143.81 678.68 139.96L684.51 127.63M680.69 145.66Q684.51 147.56 686.44 143.76L692.6 131.6M679.54 161.87A297.6 297.6 0 0 1 679.61 161.91Q684.92 164.71 687.77 159.43L700.58 135.78M657.41 310.66A162.6 162.6 0 0 1 689.09 354.61Q691.64 360.04 697.12 357.59L705.34 353.92M705.34 353.92A177.6 177.6 0 0 0 703.77 350.51Q701.11 345.13 706.45 342.38L714.45 338.26M714.45 338.26A192.6 192.6 0 0 0 711 331.85Q707.97 326.67 713.1 323.56L720.8 318.9M720.8 318.9A207.6 207.6 0 0 0 713.07 307.06Q709.55 302.2 714.36 298.61L721.57 293.23M721.57 293.23A222.6 222.6 0 0 0 708.3 277.1Q704.22 272.7 708.56 268.56L715.07 262.35M715.07 262.35A237.6 237.6 0 0 0 700.5 248.33Q695.96 244.41 699.81 239.82L705.6 232.92M705.6 232.92A252.6 252.6 0 0 0 692.2 222.42Q687.31 218.94 690.73 214.01L695.87 206.62M695.87 206.62A267.6 267.6 0 0 0 695.17 206.14Q690.2 202.79 693.49 197.78L698.44 190.26M698.44 190.26A282.6 282.6 0 0 0 697.82 189.85Q692.76 186.62 695.93 181.53L700.7 173.89M700.7 173.89A297.6 297.6 0 0 0 700.62 173.85Q695.5 170.72 698.57 165.57L703.18 157.84M703.18 157.84Q699.5 155.68 701.63 151.99L708.45 140.18M703.18 157.84Q706.82 160.04 709.05 156.41L716.19 144.79M700.7 173.89A297.6 297.6 0 0 1 700.77 173.94Q705.83 177.17 709.11 172.14L723.81 149.61M698.44 190.26A282.6 282.6 0 0 1 699.06 190.67Q704.03 194.03 707.44 189.09L731.29 154.64M695.87 206.62A267.6 267.6 0 0 1 696.56 207.1Q701.43 210.6 704.98 205.76L738.63 159.87M705.6 232.92A252.6 252.6 0 0 1 718.27 244.31Q722.54 248.52 726.8 244.29L733.19 237.95M733.19 237.95A267.6 267.6 0 0 0 727.04 231.95Q722.64 227.88 726.66 223.43L732.7 216.75M732.7 216.75A282.6 282.6 0 0 0 728.54 213.06Q723.96 209.17 727.8 204.56L733.56 197.64M733.56 197.64A297.6 297.6 0 0 0 733.49 197.59Q728.84 193.8 732.58 189.11L738.2 182.08M738.2 182.08Q734.85 179.44 737.46 176.07L745.82 165.3M738.2 182.08Q741.51 184.76 744.22 181.46L752.87 170.92M733.56 197.64A297.6 297.6 0 0 1 733.63 197.7Q738.2 201.59 742.13 197.05L759.76 176.73M732.7 216.75A282.6 282.6 0 0 1 736.78 220.52Q741.11 224.67 745.31 220.39L751.62 213.97M751.62 213.97A297.6 297.6 0 0 0 751.55 213.91Q747.23 209.75 751.34 205.38L757.51 198.83M757.51 198.83Q754.39 195.93 757.27 192.78L766.48 182.73M757.51 198.83Q760.6 201.77 763.56 198.71L773.04 188.91M751.62 213.97A297.6 297.6 0 0 1 751.68 214.03Q755.92 218.27 760.21 214.08L779.43 195.26M733.19 237.95A267.6 267.6 0 0 1 739.15 244.15Q743.18 248.59 747.67 244.6L765.6 228.66M765.6 228.66A297.6 297.6 0 0 0 765.55 228.59Q761.51 224.15 765.92 220.07L785.65 201.79M765.6 228.66A297.6 297.6 0 0 1 765.66 228.72Q769.6 233.25 774.17 229.35L781.01 223.51M781.01 223.51Q778.23 220.29 781.43 217.48L791.68 208.49M781.01 223.51Q783.76 226.77 787.04 224.05L797.53 215.34M715.07 262.35A237.6 237.6 0 0 1 728.4 277.55Q732.09 282.27 736.86 278.63L791.72 236.78M791.72 236.78Q789.11 233.41 792.46 230.78L803.19 222.36M791.72 236.78Q794.28 240.18 797.71 237.65L808.66 229.52M721.57 293.23A222.6 222.6 0 0 1 733.26 310.53Q736.32 315.69 741.52 312.71L775.36 293.31M775.36 293.31A267.6 267.6 0 0 0 774.02 291.01Q770.93 285.86 776.03 282.71L783.69 277.99M783.69 277.99A282.6 282.6 0 0 0 783.3 277.35Q780.08 272.29 785.11 269.02L792.66 264.11M792.66 264.11A297.6 297.6 0 0 0 792.61 264.04Q789.28 259.04 794.25 255.67L801.69 250.61M801.69 250.61Q799.27 247.1 802.76 244.66L813.93 236.83M801.69 250.61Q804.06 254.15 807.62 251.8L819 244.29M792.66 264.11A297.6 297.6 0 0 1 792.7 264.18Q795.92 269.25 801.02 266.08L823.86 251.87M783.69 277.99A282.6 282.6 0 0 1 784.08 278.62Q787.16 283.77 792.34 280.74L828.52 259.59M775.36 293.31A267.6 267.6 0 0 1 776.67 295.63Q779.55 300.9 784.84 298.08L819.29 279.79M819.29 279.79Q817.26 276.04 821 273.99L832.96 267.43M819.29 279.79Q821.26 283.57 825.05 281.62L837.19 275.39M720.8 318.9A207.6 207.6 0 0 1 727.71 331.25Q730.38 336.62 735.79 334.02L841.19 283.47M714.45 338.26A192.6 192.6 0 0 1 717.66 344.8Q720.12 350.28 725.63 347.9L830.35 302.85M830.35 302.85Q828.64 298.94 832.53 297.2L844.98 291.64M830.35 302.85Q832 306.77 835.94 305.14L848.54 299.92M705.34 353.92A177.6 177.6 0 0 1 706.83 357.37Q709.07 362.93 714.68 360.79L851.88 308.3M669.18 349.5A147.6 147.6 0 0 1 682.12 376.52Q684.03 382.21 689.75 380.41L827.15 337.3M827.15 337.3A297.6 297.6 0 0 0 827.12 337.21Q825.27 331.51 830.95 329.6L839.48 326.73M839.48 326.73Q838.1 322.7 842.12 321.28L854.98 316.76M839.48 326.73Q840.81 330.77 844.87 329.47L857.86 325.3M827.15 337.3A297.6 297.6 0 0 1 827.17 337.38Q828.91 343.12 834.67 341.44L860.5 333.92M543.98 398.81A27.6 27.6 0 0 1 567.76 413.81Q569.9 419.4 575.7 417.88L862.9 342.6M551.17 416.64A12.6 12.6 0 0 1 552.79 418.23Q555.47 423.54 561.31 422.18L865.07 351.35M543.2 426.4L866.99 360.16" fill="none" stroke="#000" stroke-width="1.05"/>
<g fill="#3c3c3c" font-size="6.4" text-anchor="middle" dominant-baseline="central"><text transform="translate(860.53 439.39) rotate(2.34)">100</text><text transform="translate(845.23 444.96) rotate(3.52)">99</text><text transform="translate(858.41 465.28) rotate(7.03)">89</text><text transform="translate(829.58 452.83) rotate(5.27)">42</text><text transform="translate(855.82 482.4) rotate(10.16)">84</text><text transform="translate(813.33 462.99) rotate(7.71)">33</text><text transform="translate(796.8 471.61) rotate(10.11)">57</text><text transform="translate(780.42 477.19) rotate(12.08)">38</text><text transform="translate(847.87 516.1) rotate(16.41)">92</text><text transform="translate(831.67 517.79) rotate(17.58)">83</text><text transform="translate(763.22 484.66) rotate(14.83)">92</text><text transform="translate(836.29 548.74) rotate(22.66)">78</text><text transform="translate(820.01 548.65) rotate(23.83)">100</text><text transform="translate(803.44 548.83) rotate(25.2)">78</text><text transform="translate(794.58 531.83) rotate(22.75)">44</text><text transform="translate(775.82 537.05) rotate(25.44)">71</text><text transform="translate(816.94 587.44) rotate(30.47)">99</text><text transform="translate(800.82 585.14) rotate(31.64)">78</text><text transform="translate(756.32 542.31) rotate(28.54)">56</text><text transform="translate(802.86 609.28) rotate(35.16)">42</text><text transform="translate(736.53 546.5) rotate(31.85)">48</text><text transform="translate(792.51 623.16) rotate(38.28)">86</text><text transform="translate(776.85 618.69) rotate(39.45)">90</text><text transform="translate(775.6 642.88) rotate(42.97)">86</text><text transform="translate(760.36 637.14) rotate(44.14)">100</text><text transform="translate(757.61 618.08) rotate(41.8)">40</text><text transform="translate(757.13 661.14) rotate(47.66)">87</text><text transform="translate(736.88 618.24) rotate(44.73)">90</text><text transform="translate(710.07 558.13) rotate(38.29)">40</text><text transform="translate(719.95 514.75) rotate(26.56)">93</text><text transform="translate(686.54 539.52) rotate(38.28)">50</text><text transform="translate(661.87 544.75) rotate(44.92)">91</text><text transform="translate(730.3 683.04) rotate(53.91)">88</text><text transform="translate(716.43 674.51) rotate(55.08)">85</text><text transform="translate(641.29 543.3) rotate(50)">86</text><text transform="translate(708.7 697.47) rotate(58.59)">76</text><text transform="translate(623.5 538.14) rotate(54.3)">57</text><text transform="translate(693.68 706.09) rotate(61.72)">81</text><text transform="translate(681.09 695.76) rotate(62.89)">72</text><text transform="translate(670.32 717.45) rotate(66.41)">24</text><text transform="translate(658.62 706.12) rotate(67.58)">80</text><text transform="translate(663.68 687.55) rotate(65.23)">94</text><text transform="translate(646.32 678.74) rotate(67.77)">64</text><text transform="translate(637.88 729.56) rotate(72.66)">86</text><text transform="translate(621.21 734.27) rotate(75.78)">0</text><text transform="translate(611.51 721.19) rotate(76.95)">81</text><text transform="translate(595.79 739.62) rotate(80.47)">95</text><text transform="translate(587.19 725.79) rotate(81.64)">63</text><text transform="translate(596.61 709) rotate(79.3)">47</text><text transform="translate(609.26 690.88) rotate(75.98)">99</text><text transform="translate(587.15 680.22) rotate(80.18)">36</text><text transform="translate(572.53 667.22) rotate(83.06)">76</text><text transform="translate(561.94 653.23) rotate(85.28)">69</text><text transform="translate(553.7 638.74) rotate(87.17)">56</text><text transform="translate(547 623.96) rotate(88.9)">30</text><text transform="translate(580.12 605.23) rotate(78.34)">26</text><text transform="translate(557.05 593.43) rotate(85.26)">49</text><text transform="translate(518.11 743.01) rotate(-85.47)">100</text><text transform="translate(513.13 727.5) rotate(-84.3)">82</text><text transform="translate(541.92 578.99) rotate(-89.52)">87</text><text transform="translate(492.32 739.9) rotate(-80.78)">87</text><text transform="translate(475.3 736.66) rotate(-77.66)">58</text><text transform="translate(472.48 720.62) rotate(-76.48)">91</text><text transform="translate(486.52 708.36) rotate(-78.63)">79</text><text transform="translate(478.14 691.12) rotate(-76.19)">57</text><text transform="translate(473.01 674.25) rotate(-74.19)">99</text><text transform="translate(523.7 562.61) rotate(-81.85)">90</text><text transform="translate(572.4 545.47) rotate(76.22)">55</text><text transform="translate(433.76 724.55) rotate(-69.84)">96</text><text transform="translate(417.67 718.14) rotate(-66.72)">68</text><text transform="translate(431.22 707.52) rotate(-68.28)">72</text><text transform="translate(394.25 706.91) rotate(-62.03)">80</text><text transform="translate(406.78 696.5) rotate(-63.2)">72</text><text transform="translate(425.04 688.61) rotate(-65.74)">75</text><text transform="translate(379.18 698.37) rotate(-58.91)">81</text><text transform="translate(364.6 689.02) rotate(-55.78)">58</text><text transform="translate(367.95 673.09) rotate(-54.61)">74</text><text transform="translate(385.54 666.94) rotate(-56.76)">80</text><text transform="translate(384.19 647.82) rotate(-54.32)">96</text><text transform="translate(414.51 649.55) rotate(-60.03)">30</text><text transform="translate(330.56 662.31) rotate(-47.97)">62</text><text transform="translate(345.24 655.26) rotate(-49.14)">96</text><text transform="translate(318.01 650.36) rotate(-44.84)">87</text><text transform="translate(347.03 636.71) rotate(-46.99)">88</text><text transform="translate(349.59 618.3) rotate(-44.75)">58</text><text transform="translate(395.14 618.58) rotate(-52.39)">24</text><text transform="translate(300.46 631.21) rotate(-40.16)">83</text><text transform="translate(307.98 616.77) rotate(-38.98)">92</text><text transform="translate(315.39 601.95) rotate(-37.62)">87</text><text transform="translate(382.27 587.34) rotate(-45)">13</text><text transform="translate(274.87 596.32) rotate(-32.34)">0</text><text transform="translate(284.29 583.03) rotate(-31.17)">100</text><text transform="translate(293.64 569.35) rotate(-29.8)">88</text><text transform="translate(257.97 566.09) rotate(-26.09)">83</text><text transform="translate(302.4 554.16) rotate(-27.95)">79</text><text transform="translate(323.13 560.3) rotate(-31.32)">35</text><text transform="translate(328.08 538.55) rotate(-27.53)">98</text><text transform="translate(247.51 542.32) rotate(-21.41)">100</text><text transform="translate(336.04 520.68) rotate(-24.47)">73</text><text transform="translate(241.63 526.03) rotate(-18.28)">61</text><text transform="translate(253.99 515.42) rotate(-17.11)">25</text><text transform="translate(344.44 501.86) rotate(-20.79)">83</text><text transform="translate(354.83 486.09) rotate(-17.58)">96</text><text transform="translate(232.58 492.6) rotate(-12.03)">100</text><text transform="translate(246.02 483.41) rotate(-10.86)">92</text><text transform="translate(228.21 467) rotate(-7.34)">100</text><text transform="translate(259.22 471.89) rotate(-9.1)">97</text><text transform="translate(365.53 468.54) rotate(-13.34)">68</text><text transform="translate(396.86 508.09) rotate(-29.17)">43</text><text transform="translate(500.25 525.06) rotate(-66.48)">76</text><text transform="translate(226.46 449.76) rotate(-4.22)">0</text><text transform="translate(241.03 442.48) rotate(-3.05)">0</text><text transform="translate(255.72 434.83) rotate(-1.68)">0</text><text transform="translate(270.6 427.42) rotate(-0.21)">0</text><text transform="translate(285.67 420.56) rotate(1.3)">0</text><text transform="translate(300.9 414.39) rotate(2.84)">0</text><text transform="translate(316.27 408.99) rotate(4.39)">0</text><text transform="translate(331.74 404.39) rotate(5.94)">0</text><text transform="translate(347.29 400.6) rotate(7.5)">0</text><text transform="translate(362.88 397.63) rotate(9.06)">0</text><text transform="translate(378.47 395.5) rotate(10.63)">100</text><text transform="translate(394.04 394.18) rotate(12.19)">76</text><text transform="translate(238.05 338.36) rotate(16.09)">100</text><text transform="translate(254.24 336.59) rotate(17.27)">83</text><text transform="translate(410.12 391.42) rotate(14.73)">63</text><text transform="translate(246.26 313.72) rotate(20.78)">100</text><text transform="translate(256.46 289.83) rotate(25.47)">99</text><text transform="translate(267.4 301.89) rotate(24.3)">97</text><text transform="translate(284.83 300.08) rotate(26.05)">79</text><text transform="translate(293.05 318.06) rotate(23.42)">52</text><text transform="translate(312.46 311.88) rotate(26.4)">76</text><text transform="translate(277.69 252.12) rotate(33.28)">100</text><text transform="translate(293.68 255.21) rotate(34.45)">99</text><text transform="translate(301.17 271.05) rotate(32.7)">98</text><text transform="translate(332.15 306.77) rotate(29.55)">89</text><text transform="translate(353.12 301.22) rotate(33.37)">38</text><text transform="translate(298.24 224.25) rotate(39.53)">100</text><text transform="translate(372.19 300.09) rotate(36.45)">56</text><text transform="translate(389.99 301.61) rotate(39.16)">20</text><text transform="translate(406.02 305.88) rotate(41.3)">43</text><text transform="translate(420.92 311.78) rotate(43.15)">43</text><text transform="translate(435.03 318.77) rotate(44.86)">54</text><text transform="translate(448.47 326.6) rotate(46.49)">100</text><text transform="translate(461.31 335.16) rotate(48.09)">69</text><text transform="translate(451.37 370.33) rotate(31.41)">69</text><text transform="translate(473.66 365.25) rotate(41.33)">92</text><text transform="translate(354.7 170.79) rotate(53.59)">98</text><text transform="translate(368.62 179.24) rotate(54.77)">88</text><text transform="translate(376.22 156.24) rotate(58.28)">80</text><text transform="translate(389.41 165.8) rotate(59.45)">87</text><text transform="translate(402.98 175.3) rotate(60.82)">67</text><text transform="translate(416.42 185.07) rotate(62.29)">7</text><text transform="translate(429.46 195.27) rotate(63.8)">29</text><text transform="translate(422.46 132.65) rotate(67.66)">73</text><text transform="translate(443.47 205.25) rotate(65.73)">32</text><text transform="translate(438.65 126.5) rotate(70.78)">97</text><text transform="translate(458.88 215) rotate(68.25)">61</text><text transform="translate(472.9 225.76) rotate(70.69)">22</text><text transform="translate(463.51 118.96) rotate(75.47)">44</text><text transform="translate(485.69 237.35) rotate(73.08)">13</text><text transform="translate(480.39 115.07) rotate(78.59)">100</text><text transform="translate(489.44 128.61) rotate(79.77)">99</text><text transform="translate(498.87 142.24) rotate(81.13)">64</text><text transform="translate(502.45 248.4) rotate(77.11)">61</text><text transform="translate(514.66 110.09) rotate(84.84)">96</text><text transform="translate(540.6 108.81) rotate(89.53)">94</text><text transform="translate(534.54 123.92) rotate(88.36)">95</text><text transform="translate(526.15 139.31) rotate(86.6)">76</text><text transform="translate(519.45 260.49) rotate(81.85)">23</text><text transform="translate(534.85 274.03) rotate(86.86)">13</text><text transform="translate(497.98 296.44) rotate(70.82)">70</text><text transform="translate(499.89 362.01) rotate(56.07)">86</text><text transform="translate(575.19 110.42) rotate(275.78)">76</text><text transform="translate(579.83 126.03) rotate(276.95)">95</text><text transform="translate(569.24 139.98) rotate(275.2)">75</text><text transform="translate(578.51 156.1) rotate(277.44)">68</text><text transform="translate(617.85 117.7) rotate(283.59)">99</text><text transform="translate(608.29 130.88) rotate(282.42)">71</text><text transform="translate(587.63 172.66) rotate(279.93)">71</text><text transform="translate(634.57 122.23) rotate(286.72)">99</text><text transform="translate(599.11 190.33) rotate(283.33)">73</text><text transform="translate(606.67 207.83) rotate(286.19)">44</text><text transform="translate(659.12 130.71) rotate(291.41)">58</text><text transform="translate(659.38 146.99) rotate(292.58)">77</text><text transform="translate(613.77 225.85) rotate(289.39)">69</text><text transform="translate(682.89 141.17) rotate(296.09)">0</text><text transform="translate(681.83 157.42) rotate(297.27)">100</text><text transform="translate(621.44 244.95) rotate(293.33)">86</text><text transform="translate(705.74 153.54) rotate(300.78)">0</text><text transform="translate(703.34 169.65) rotate(301.95)">0</text><text transform="translate(701.18 186.08) rotate(303.32)">100</text><text transform="translate(698.72 202.51) rotate(304.79)">61</text><text transform="translate(741.32 178.17) rotate(308.59)">96</text><text transform="translate(736.76 193.8) rotate(309.77)">87</text><text transform="translate(760.94 195.19) rotate(313.28)">0</text><text transform="translate(755.12 210.4) rotate(314.45)">100</text><text transform="translate(736.05 213.04) rotate(312.11)">99</text><text transform="translate(784.82 220.27) rotate(319.53)">82</text><text transform="translate(769.34 225.34) rotate(318.36)">100</text><text transform="translate(736.74 234.43) rotate(315.23)">86</text><text transform="translate(708.82 229.1) rotate(310.01)">62</text><text transform="translate(795.7 233.75) rotate(322.66)">95</text><text transform="translate(718.69 258.89) rotate(316.33)">51</text><text transform="translate(805.82 247.8) rotate(325.78)">84</text><text transform="translate(796.85 261.38) rotate(326.95)">89</text><text transform="translate(787.95 275.36) rotate(328.32)">81</text><text transform="translate(823.71 277.45) rotate(332.03)">56</text><text transform="translate(779.7 290.82) rotate(330.18)">100</text><text transform="translate(725.58 290.24) rotate(323.25)">77</text><text transform="translate(725.08 316.31) rotate(328.81)">62</text><text transform="translate(834.94 300.87) rotate(336.72)">98</text><text transform="translate(718.9 335.98) rotate(332.77)">57</text><text transform="translate(709.9 351.88) rotate(335.91)">69</text><text transform="translate(660.92 307.11) rotate(314.62)">83</text><text transform="translate(844.22 325.13) rotate(341.41)">100</text><text transform="translate(831.92 335.8) rotate(342.58)">99</text><text transform="translate(673.45 346.89) rotate(328.6)">100</text><text transform="translate(556.57 365.25) rotate(282.34)">55</text><text transform="translate(497.91 411.75) rotate(17.93)">86</text><text transform="translate(544.12 393.81) rotate(271.62)">58</text><text transform="translate(554.34 412.77) rotate(309.25)">94</text></g>
<g fill="#b01a22" stroke="#b01a22" stroke-width="0.12" font-size="8.8" dominant-baseline="central"><text transform="translate(877.2 426.4) rotate(0)">AtWRKY49</text><text transform="translate(877.08 435.51) rotate(1.56)">MdWRKY86</text><text transform="translate(876.7 444.61) rotate(3.12)">MdWRKY147</text><text transform="translate(876.08 453.69) rotate(4.69)">MdWRKY85</text><text transform="translate(875.21 462.76) rotate(6.25)">MdWRKY14</text><text transform="translate(874.1 471.8) rotate(7.81)">MdWRKY74</text><text transform="translate(872.74 480.81) rotate(9.38)">MdWRKY130</text><text transform="translate(871.13 489.77) rotate(10.94)">MdWRKY69</text><text transform="translate(869.28 498.69) rotate(12.5)">MdWRKY1</text><text transform="translate(867.19 507.56) rotate(14.06)">MdWRKY6</text><text transform="translate(864.86 516.36) rotate(15.62)">AtWRKY26</text><text transform="translate(862.28 525.1) rotate(17.19)">AtWRKY25</text><text transform="translate(859.47 533.76) rotate(18.75)">AtWRKY33</text><text transform="translate(856.43 542.34) rotate(20.31)">AtWRKY4</text><text transform="translate(853.15 550.84) rotate(21.88)">MdWRKY37</text><text transform="translate(849.64 559.25) rotate(23.44)">AtWRKY66</text><text transform="translate(845.91 567.55) rotate(25)">AtWRKY32</text><text transform="translate(841.95 575.76) rotate(26.56)">AtWRKY19</text><text transform="translate(837.76 583.85) rotate(28.12)">MdWRKY3</text><text transform="translate(833.36 591.82) rotate(29.69)">MdWRKY107</text><text transform="translate(828.74 599.67) rotate(31.25)">AtWRKY51</text><text transform="translate(823.91 607.39) rotate(32.81)">MdWRKY58</text><text transform="translate(818.87 614.98) rotate(34.38)">MdWRKY20</text><text transform="translate(813.63 622.43) rotate(35.94)">AtWRKY44</text><text transform="translate(808.18 629.73) rotate(37.5)">AtWRKY2</text><text transform="translate(802.54 636.88) rotate(39.06)">MdWRKY34</text><text transform="translate(796.7 643.87) rotate(40.62)">MdWRKY68</text><text transform="translate(790.68 650.7) rotate(42.19)">MdWRKY70</text><text transform="translate(784.47 657.37) rotate(43.75)">AtWRKY7</text><text transform="translate(778.08 663.86) rotate(45.31)">MdWRKY20</text><text transform="translate(771.52 670.17) rotate(46.88)">MdWRKY18</text><text transform="translate(764.79 676.31) rotate(48.44)">MdWRKY76</text><text transform="translate(757.89 682.26) rotate(50)">MdWRKY10</text><text transform="translate(750.83 688.02) rotate(51.56)">AtWRKY44</text><text transform="translate(743.62 693.58) rotate(53.12)">MdWRKY110</text><text transform="translate(736.26 698.95) rotate(54.69)">MdWRKY53</text><text transform="translate(728.76 704.11) rotate(56.25)">AtWRKY1</text><text transform="translate(721.12 709.07) rotate(57.81)">AtWRKY10</text><text transform="translate(713.35 713.81) rotate(59.38)">AtWRKY11</text><text transform="translate(705.44 718.35) rotate(60.94)">MdWRKY106</text><text transform="translate(697.42 722.66) rotate(62.5)">MdWRKY50</text><text transform="translate(689.29 726.76) rotate(64.06)">MdWRKY9</text><text transform="translate(681.04 730.63) rotate(65.62)">MdWRKY132</text><text transform="translate(672.7 734.27) rotate(67.19)">MdWRKY104</text><text transform="translate(664.25 737.69) rotate(68.75)">MdWRKY42</text><text transform="translate(655.72 740.88) rotate(70.31)">MdWRKY72</text><text transform="translate(647.1 743.83) rotate(71.88)">AtWRKY71</text><text transform="translate(638.41 746.54) rotate(73.44)">MdWRKY105</text><text transform="translate(629.65 749.02) rotate(75)">MdWRKY108</text><text transform="translate(620.82 751.26) rotate(76.56)">MdWRKY52</text><text transform="translate(611.93 753.25) rotate(78.12)">MdWRKY8</text><text transform="translate(602.99 755) rotate(79.69)">MdWRKY43</text><text transform="translate(594.01 756.51) rotate(81.25)">AtWRKY42</text><text transform="translate(584.99 757.78) rotate(82.81)">AtWRKY47</text><text transform="translate(575.94 758.79) rotate(84.38)">AtWRKY6</text><text transform="translate(566.86 759.56) rotate(85.94)">AtWRKY36</text><text transform="translate(557.77 760.08) rotate(87.5)">AtWRKY31</text><text transform="translate(548.66 760.36) rotate(89.06)">MdWRKY109</text><text text-anchor="end" transform="translate(539.56 760.38) rotate(-89.38)">MdWRKY28</text><text text-anchor="end" transform="translate(530.45 760.16) rotate(-87.81)">MdWRKY61</text><text text-anchor="end" transform="translate(521.36 759.68) rotate(-86.25)">MdWRKY45</text><text text-anchor="end" transform="translate(512.28 758.97) rotate(-84.69)">MdWRKY46</text><text text-anchor="end" transform="translate(503.22 758) rotate(-83.12)">MdWRKY21</text><text text-anchor="end" transform="translate(494.19 756.78) rotate(-81.56)">MdWRKY29</text><text text-anchor="end" transform="translate(485.2 755.33) rotate(-80)">MdWRKY99</text><text text-anchor="end" transform="translate(476.25 753.62) rotate(-78.44)">MdWRKY112</text><text text-anchor="end" transform="translate(467.36 751.67) rotate(-76.88)">MdWRKY55</text><text text-anchor="end" transform="translate(458.52 749.49) rotate(-75.31)">AtWRKY40</text><text text-anchor="end" transform="translate(449.74 747.06) rotate(-73.75)">MdWRKY18</text><text text-anchor="end" transform="translate(441.03 744.39) rotate(-72.19)">MdWRKY60</text><text text-anchor="end" transform="translate(432.4 741.48) rotate(-70.62)">MdWRKY58</text><text text-anchor="end" transform="translate(423.85 738.35) rotate(-69.06)">MdWRKY115</text><text text-anchor="end" transform="translate(415.38 734.98) rotate(-67.5)">MdWRKY68</text><text text-anchor="end" transform="translate(407.02 731.38) rotate(-65.94)">MdWRKY23</text><text text-anchor="end" transform="translate(398.75 727.55) rotate(-64.38)">MdWRKY48</text><text text-anchor="end" transform="translate(390.59 723.5) rotate(-62.81)">MdWRKY47</text><text text-anchor="end" transform="translate(382.55 719.23) rotate(-61.25)">AtWRKY23</text><text text-anchor="end" transform="translate(374.62 714.74) rotate(-59.69)">MdWRKY51</text><text text-anchor="end" transform="translate(366.83 710.03) rotate(-58.12)">AtWRKY39</text><text text-anchor="end" transform="translate(359.16 705.12) rotate(-56.56)">MdWRKY30</text><text text-anchor="end" transform="translate(351.63 700) rotate(-55)">MdWRKY100</text><text text-anchor="end" transform="translate(344.24 694.67) rotate(-53.44)">MdWRKY50</text><text text-anchor="end" transform="translate(337 689.15) rotate(-51.88)">AtWRKY59</text><text text-anchor="end" transform="translate(329.91 683.43) rotate(-50.31)">AtWRKY71</text><text text-anchor="end" transform="translate(322.98 677.51) rotate(-48.75)">MdWRKY111</text><text text-anchor="end" transform="translate(316.21 671.42) rotate(-47.19)">MdWRKY54</text><text text-anchor="end" transform="translate(309.62 665.14) rotate(-45.62)">AtWRKY8</text><text text-anchor="end" transform="translate(303.19 658.68) rotate(-44.06)">AtWRKY28</text><text text-anchor="end" transform="translate(296.95 652.05) rotate(-42.5)">MdWRKY79</text><text text-anchor="end" transform="translate(290.89 645.25) rotate(-40.94)">MdWRKY142</text><text text-anchor="end" transform="translate(285.01 638.29) rotate(-39.38)">MdWRKY19</text><text text-anchor="end" transform="translate(279.33 631.17) rotate(-37.81)">AtWRKY43</text><text text-anchor="end" transform="translate(273.85 623.9) rotate(-36.25)">MdWRKY57</text><text text-anchor="end" transform="translate(268.56 616.48) rotate(-34.69)">MdWRKY22</text><text text-anchor="end" transform="translate(263.48 608.92) rotate(-33.12)">MdWRKY88</text><text text-anchor="end" transform="translate(258.61 601.23) rotate(-31.56)">MdWRKY27</text><text text-anchor="end" transform="translate(253.95 593.4) rotate(-30)">AtWRKY87</text><text text-anchor="end" transform="translate(249.5 585.45) rotate(-28.44)">MdWRKY45</text><text text-anchor="end" transform="translate(245.27 577.38) rotate(-26.88)">MdWRKY105</text><text text-anchor="end" transform="translate(241.27 569.2) rotate(-25.31)">AtWRKY49</text><text text-anchor="end" transform="translate(237.49 560.92) rotate(-23.75)">AtWRKY75</text><text text-anchor="end" transform="translate(233.93 552.53) rotate(-22.19)">AtWRKY56</text><text text-anchor="end" transform="translate(230.61 544.05) rotate(-20.62)">AtWRKY24</text><text text-anchor="end" transform="translate(227.52 535.48) rotate(-19.06)">AtWRKY43</text><text text-anchor="end" transform="translate(224.66 526.84) rotate(-17.5)">MdWRKY61</text><text text-anchor="end" transform="translate(222.04 518.11) rotate(-15.94)">MdWRKY59</text><text text-anchor="end" transform="translate(219.66 509.32) rotate(-14.38)">MdWRKY91</text><text text-anchor="end" transform="translate(217.52 500.47) rotate(-12.81)">MdWRKY57</text><text text-anchor="end" transform="translate(215.62 491.56) rotate(-11.25)">MdWRKY40</text><text text-anchor="end" transform="translate(213.96 482.6) rotate(-9.69)">AtWRKY13</text><text text-anchor="end" transform="translate(212.55 473.61) rotate(-8.12)">MdWRKY90</text><text text-anchor="end" transform="translate(211.39 464.57) rotate(-6.56)">AtWRKY12</text><text text-anchor="end" transform="translate(210.47 455.51) rotate(-5)">MdWRKY135</text><text text-anchor="end" transform="translate(209.8 446.43) rotate(-3.44)">MdWRKY122</text><text text-anchor="end" transform="translate(209.38 437.33) rotate(-1.88)">MdWRKY148</text><text text-anchor="end" transform="translate(209.2 428.22) rotate(-0.31)">MdWRKY136</text><text text-anchor="end" transform="translate(209.28 419.11) rotate(1.25)">MdWRKY118</text><text text-anchor="end" transform="translate(209.6 410.01) rotate(2.81)">MdWRKY152</text><text text-anchor="end" transform="translate(210.17 400.92) rotate(4.38)">MdWRKY146</text><text text-anchor="end" transform="translate(210.99 391.85) rotate(5.94)">MdWRKY123</text><text text-anchor="end" transform="translate(212.06 382.8) rotate(7.5)">MdWRKY121</text><text text-anchor="end" transform="translate(213.37 373.79) rotate(9.06)">MdWRKY124</text><text text-anchor="end" transform="translate(214.93 364.82) rotate(10.62)">MdWRKY140</text><text text-anchor="end" transform="translate(216.73 355.89) rotate(12.19)">MdWRKY128</text><text text-anchor="end" transform="translate(218.77 347.01) rotate(13.75)">MdWRKY80</text><text text-anchor="end" transform="translate(221.06 338.2) rotate(15.31)">MdWRKY113</text><text text-anchor="end" transform="translate(223.58 329.44) rotate(16.88)">MdWRKY114</text><text text-anchor="end" transform="translate(226.34 320.77) rotate(18.44)">MdWRKY69</text><text text-anchor="end" transform="translate(229.34 312.17) rotate(20)">AtWRKY92</text><text text-anchor="end" transform="translate(232.57 303.65) rotate(21.56)">MdWRKY129</text><text text-anchor="end" transform="translate(236.04 295.23) rotate(23.12)">MdWRKY29</text><text text-anchor="end" transform="translate(239.73 286.9) rotate(24.69)">AtWRKY25</text><text text-anchor="end" transform="translate(243.64 278.68) rotate(26.25)">MdWRKY83</text><text text-anchor="end" transform="translate(247.78 270.56) rotate(27.81)">MdWRKY22</text><text text-anchor="end" transform="translate(252.14 262.57) rotate(29.38)">AtWRKY58</text><text text-anchor="end" transform="translate(256.72 254.69) rotate(30.94)">MdWRKY27</text><text text-anchor="end" transform="translate(261.51 246.94) rotate(32.5)">AtWRKY97</text><text text-anchor="end" transform="translate(266.51 239.33) rotate(34.06)">MdWRKY96</text><text text-anchor="end" transform="translate(271.71 231.85) rotate(35.62)">MdWRKY64</text><text text-anchor="end" transform="translate(277.11 224.52) rotate(37.19)">MdWRKY16</text><text text-anchor="end" transform="translate(282.72 217.34) rotate(38.75)">AtWRKY9</text><text text-anchor="end" transform="translate(288.52 210.32) rotate(40.31)">MdWRKY72</text><text text-anchor="end" transform="translate(294.5 203.45) rotate(41.88)">MdWRKY35</text><text text-anchor="end" transform="translate(300.67 196.75) rotate(43.44)">AtWRKY78</text><text text-anchor="end" transform="translate(307.03 190.23) rotate(45)">AtWRKY14</text><text text-anchor="end" transform="translate(313.55 183.87) rotate(46.56)">MdWRKY52</text><text text-anchor="end" transform="translate(320.25 177.7) rotate(48.12)">AtWRKY3</text><text text-anchor="end" transform="translate(327.12 171.72) rotate(49.69)">MdWRKY4</text><text text-anchor="end" transform="translate(334.14 165.92) rotate(51.25)">MdWRKY65</text><text text-anchor="end" transform="translate(341.32 160.31) rotate(52.81)">AtWRKY17</text><text text-anchor="end" transform="translate(348.65 154.91) rotate(54.38)">MdWRKY75</text><text text-anchor="end" transform="translate(356.13 149.71) rotate(55.94)">MdWRKY82</text><text text-anchor="end" transform="translate(363.74 144.71) rotate(57.5)">MdWRKY139</text><text text-anchor="end" transform="translate(371.49 139.92) rotate(59.06)">MdWRKY138</text><text text-anchor="end" transform="translate(379.37 135.34) rotate(60.62)">MdWRKY143</text><text text-anchor="end" transform="translate(387.36 130.98) rotate(62.19)">MdWRKY35</text><text text-anchor="end" transform="translate(395.48 126.84) rotate(63.75)">MdWRKY103</text><text text-anchor="end" transform="translate(403.7 122.93) rotate(65.31)">MdWRKY36</text><text text-anchor="end" transform="translate(412.03 119.24) rotate(66.88)">MdWRKY24</text><text text-anchor="end" transform="translate(420.45 115.77) rotate(68.44)">AtWRKY48</text><text text-anchor="end" transform="translate(428.97 112.54) rotate(70)">AtWRKY17</text><text text-anchor="end" transform="translate(437.57 109.54) rotate(71.56)">AtWRKY11</text><text text-anchor="end" transform="translate(446.24 106.78) rotate(73.12)">AtWRKY7</text><text text-anchor="end" transform="translate(455 104.26) rotate(74.69)">MdWRKY38</text><text text-anchor="end" transform="translate(463.81 101.97) rotate(76.25)">MdWRKY67</text><text text-anchor="end" transform="translate(472.69 99.93) rotate(77.81)">MdWRKY102</text><text text-anchor="end" transform="translate(481.62 98.13) rotate(79.38)">MdWRKY101</text><text text-anchor="end" transform="translate(490.59 96.57) rotate(80.94)">MdWRKY31</text><text text-anchor="end" transform="translate(499.6 95.26) rotate(82.5)">AtWRKY15</text><text text-anchor="end" transform="translate(508.65 94.19) rotate(84.06)">AtWRKY39</text><text text-anchor="end" transform="translate(517.72 93.37) rotate(85.62)">AtWRKY74</text><text text-anchor="end" transform="translate(526.81 92.8) rotate(87.19)">MdWRKY77</text><text text-anchor="end" transform="translate(535.91 92.48) rotate(88.75)">MdWRKY2</text><text transform="translate(545.02 92.4) rotate(270.31)">MdWRKY5</text><text transform="translate(554.13 92.58) rotate(271.88)">AtWRKY21</text><text transform="translate(563.23 93) rotate(273.44)">MdWRKY98</text><text transform="translate(572.31 93.67) rotate(275)">MdWRKY62</text><text transform="translate(581.37 94.59) rotate(276.56)">MdWRKY94</text><text transform="translate(590.41 95.75) rotate(278.12)">AtWRKY55</text><text transform="translate(599.4 97.16) rotate(279.69)">MdWRKY65</text><text transform="translate(608.36 98.82) rotate(281.25)">AtWRKY30</text><text transform="translate(617.27 100.72) rotate(282.81)">MdWRKY93</text><text transform="translate(626.12 102.86) rotate(284.38)">MdWRKY60</text><text transform="translate(634.91 105.24) rotate(285.94)">AtWRKY41</text><text transform="translate(643.64 107.86) rotate(287.5)">AtWRKY53</text><text transform="translate(652.28 110.72) rotate(289.06)">MdWRKY127</text><text transform="translate(660.85 113.81) rotate(290.62)">MdWRKY26</text><text transform="translate(669.33 117.13) rotate(292.19)">MdWRKY84</text><text transform="translate(677.72 120.69) rotate(293.75)">MdWRKY145</text><text transform="translate(686 124.47) rotate(295.31)">MdWRKY150</text><text transform="translate(694.18 128.47) rotate(296.88)">MdWRKY117</text><text transform="translate(702.25 132.7) rotate(298.44)">MdWRKY120</text><text transform="translate(710.2 137.15) rotate(300)">MdWRKY144</text><text transform="translate(718.03 141.81) rotate(301.56)">MdWRKY134</text><text transform="translate(725.72 146.68) rotate(303.12)">MdWRKY137</text><text transform="translate(733.28 151.76) rotate(304.69)">MdWRKY141</text><text transform="translate(740.7 157.05) rotate(306.25)">MdWRKY133</text><text transform="translate(747.97 162.53) rotate(307.81)">MdWRKY15</text><text transform="translate(755.09 168.21) rotate(309.38)">MdWRKY151</text><text transform="translate(762.05 174.09) rotate(310.94)">MdWRKY126</text><text transform="translate(768.85 180.15) rotate(312.5)">MdWRKY116</text><text transform="translate(775.48 186.39) rotate(314.06)">MdWRKY119</text><text transform="translate(781.94 192.82) rotate(315.62)">MdWRKY149</text><text transform="translate(788.22 199.41) rotate(317.19)">MdWRKY125</text><text transform="translate(794.31 206.18) rotate(318.75)">MdWRKY16</text><text transform="translate(800.23 213.11) rotate(320.31)">MdWRKY131</text><text transform="translate(805.95 220.2) rotate(321.88)">MdWRKY63</text><text transform="translate(811.47 227.44) rotate(323.44)">MdWRKY95</text><text transform="translate(816.8 234.83) rotate(325)">MdWRKY64</text><text transform="translate(821.92 242.36) rotate(326.56)">AtWRKY67</text><text transform="translate(826.83 250.03) rotate(328.12)">AtWRKY63</text><text transform="translate(831.54 257.82) rotate(329.69)">AtWRKY66</text><text transform="translate(836.03 265.75) rotate(331.25)">AtWRKY38</text><text transform="translate(840.3 273.79) rotate(332.81)">AtWRKY62</text><text transform="translate(844.35 281.95) rotate(334.38)">MdWRKY41</text><text transform="translate(848.18 290.22) rotate(335.94)">AtWRKY70</text><text transform="translate(851.78 298.58) rotate(337.5)">AtWRKY54</text><text transform="translate(855.15 307.05) rotate(339.06)">AtWRKY46</text><text transform="translate(858.28 315.6) rotate(340.62)">MdWRKY34</text><text transform="translate(861.19 324.23) rotate(342.19)">MdWRKY33</text><text transform="translate(863.86 332.94) rotate(343.75)">MdWRKY32</text><text transform="translate(866.29 341.72) rotate(345.31)">MdWRKY12</text><text transform="translate(868.47 350.56) rotate(346.88)">MdWRKY73</text><text transform="translate(870.42 359.45) rotate(348.44)">MdWRKY13</text></g>
</svg>
<div id="topl"></div>
<div class="vl" style="left:1079px"></div>
<div class="vl" style="left:1094px"></div>

<div id="ctl">
  <div id="ctlh">
    <svg style="position:absolute;left:14px;top:13px" width="22" height="16" viewBox="0 0 22 16"><path d="M2 1.5L9 8L2 14.5M11 1.5L18 8L11 14.5" fill="none" stroke="#333" stroke-width="2.2"/></svg>
    <div class="t">Controls</div>
    <svg style="position:absolute;left:139px;top:3px" width="120" height="30" viewBox="1495 20 120 30">
<rect x="1503.3" y="26.8" width="15.8" height="16.2" rx="2.6" fill="#3377b5"/>
<path d="M1506.2 40.3L1506.8 37.2L1513.6 30.4L1515.8 32.6L1509 39.4Z" fill="#fff"/>
<path d="M1533.8 29.6L1537 26.8H1544V39.2H1533.8Z" fill="#fff" stroke="#3377b5" stroke-width="1.4" stroke-linejoin="round"/>
<path d="M1533.8 29.8H1537V26.8" fill="none" stroke="#3377b5" stroke-width="1.1"/>
<path d="M1541 33.4L1544.2 30.7H1551V44H1541Z" fill="#fff" stroke="#3377b5" stroke-width="1.4" stroke-linejoin="round"/>
<path d="M1541 33.6H1544.2V30.7" fill="none" stroke="#3377b5" stroke-width="1.1"/>
<rect x="1565.9" y="26.8" width="15.4" height="16.2" rx="2.6" fill="#3377b5"/>
<path d="M1574.1 31.5L1569.8 34.9L1576.3 39" stroke="#fff" stroke-width="1.5" fill="none"/>
<circle cx="1574.1" cy="31.3" r="2.2" fill="#fff"/><circle cx="1569.8" cy="34.9" r="2.2" fill="#fff"/><circle cx="1576.3" cy="39.1" r="2.2" fill="#fff"/>
<path d="M1595.7 30.6H1610.1" stroke="#3377b5" stroke-width="1.6"/>
<path d="M1600.2 30.2V27.6H1605.3V30.2" fill="none" stroke="#3377b5" stroke-width="1.5"/>
<path d="M1597.2 31.2H1608.7V42Q1608.7 43 1607.7 43H1598.2Q1597.2 43 1597.2 42Z" fill="#3377b5"/>
<path d="M1600.6 33V40.6M1603 33V40.6M1605.4 33V40.6" stroke="#fff" stroke-width="1.1"/>
</svg>
  </div>
  <div id="lc">Leaf Colors</div>
  <svg style="position:absolute;left:233px;top:58px" width="20" height="12" viewBox="0 0 20 12"><rect x="0.5" y="0.5" width="11" height="11" fill="#fff" stroke="#6aa0c8"/><path d="M2.5 6L5 9L10 1.5" fill="none" stroke="#2a6fb0" stroke-width="1.5"/><path d="M13 6.5H18" stroke="#3a85c6" stroke-width="1.5"/></svg>
  <div id="lcline"></div>
  <div id="row">
    <svg style="position:absolute;left:1px;top:4px" width="12" height="12" viewBox="0 0 12 12"><circle cx="6" cy="6" r="5.3" fill="#fff" stroke="#444" stroke-width="1"/><circle cx="6" cy="6" r="3.8" fill="#777"/></svg>
    <div class="n">leaf</div>
    <svg style="position:absolute;left:176px;top:9px" width="52" height="11" viewBox="0 0 52 11"><path d="M1 10L2 7L8 1L9.5 2.5L3.5 8.5Z" fill="#555"/><path d="M19.5 10V3M16.5 5.5L19.5 2L22.5 5.5" stroke="#1010d0" stroke-width="1.8" fill="none"/><path d="M32.5 1V8M29.5 5.5L32.5 9L35.5 5.5" stroke="#1010d0" stroke-width="1.8" fill="none"/><path d="M42.5 2.5L48 8.5M48 2.5L42.5 8.5" stroke="#e01010" stroke-width="2"/></svg>
  </div>
</div>
<div id="tiparr"></div>
<div id="tip">Edit tree</div>

<div id="dlg">
  <div class="title">Upload colors for Leaf Labels</div>
  <div id="content">
    <div class="lab" style="left:29px;top:4px">Name:</div>
    <div id="name"><span>leaf</span></div>
    <div class="lab" style="left:37px;top:33px">Data:</div>
    <div id="gut"><div class="ln" style="top:6px">1</div><div class="ln" style="top:23px">2</div></div>
    <div id="hl"></div>
    <div id="code">AtWRKY49,AtWRKY12   <i>red</i> ad</div>
    <div class="lab" style="left:7px;top:334px">Or upload:</div>
    <div id="filebtn"><svg style="position:absolute;left:7px;top:6px" width="42" height="10" viewBox="0 0 42 10"><g fill="none" stroke="#222" stroke-width="1.05" stroke-linecap="butt"><path transform="translate(0.80 0) scale(0.9)" d="M1 1.3L2 2.4M0.3 4.6H1.8V8.2M1.2 8.6Q3.5 9.6 10 9.6M4 2.6H9.2M6.5 0.4V5.2M3.4 5.2H9.8M5.4 5.4Q5.4 7.6 3.5 8.4M7.6 5.4V7.8Q7.6 8.3 8.2 8.3H9.6"/><path transform="translate(10.90 0) scale(0.9)" d="M0 3.2H3.2M1.6 0.4V9.2Q1.6 9.8 0.8 9.3M0 7.4L3.2 5.6M4.2 1H9L5 4.6M5.2 1.6L9.8 4.6M4.2 6.2H9.8M4.4 8H9.6M7 4.6V10"/><path transform="translate(21.00 0) scale(0.9)" d="M5 0.2V1.6M0.4 2.6H9.6M2.6 2.8Q4.8 8 9.6 9.6M7.4 2.8Q5.2 8 0.4 9.6"/><path transform="translate(31.10 0) scale(0.9)" d="M3 0.3L0.3 4.6M1.8 2.6V10M4.6 0.8L3.8 3.6M4 3.2H9.6M3.4 6.2H10M6.6 0.4V10"/></g></svg></div>
    <svg style="position:absolute;left:128px;top:340px" width="54" height="10" viewBox="0 0 52 10"><g fill="none" stroke="#555" stroke-width="1" stroke-linecap="butt"><path transform="translate(0.00 0) scale(0.9)" d="M1.4 3H8.6M0.3 5.6H9.7M5 0.3V10M4.8 5.8L0.4 9.4M5.2 5.8L9.6 9.4"/><path transform="translate(10.30 0) scale(0.9)" d="M1 1.3L2 2.4M0.3 4.6H1.8V8.2M1.2 8.6Q3.5 9.6 10 9.6M4 2.6H9.2M6.5 0.4V5.2M3.4 5.2H9.8M5.4 5.4Q5.4 7.6 3.5 8.4M7.6 5.4V7.8Q7.6 8.3 8.2 8.3H9.6"/><path transform="translate(20.60 0) scale(0.9)" d="M0 3.2H3.2M1.6 0.4V9.2Q1.6 9.8 0.8 9.3M0 7.4L3.2 5.6M4.2 1H9L5 4.6M5.2 1.6L9.8 4.6M4.2 6.2H9.8M4.4 8H9.6M7 4.6V10"/><path transform="translate(30.90 0) scale(0.9)" d="M5 0.2V1.6M0.4 2.6H9.6M2.6 2.8Q4.8 8 9.6 9.6M7.4 2.8Q5.2 8 0.4 9.6"/><path transform="translate(41.20 0) scale(0.9)" d="M3 0.3L0.3 4.6M1.8 2.6V10M4.6 0.8L3.8 3.6M4 3.2H9.6M3.4 6.2H10M6.6 0.4V10"/></g></svg>
    <div class="btn" style="left:570px;width:63px;background:#555">Cancel</div>
    <div class="btn" style="left:637px;width:64px;background:#e23a0c">Submit</div>
  </div>
</div>
</body></html>
